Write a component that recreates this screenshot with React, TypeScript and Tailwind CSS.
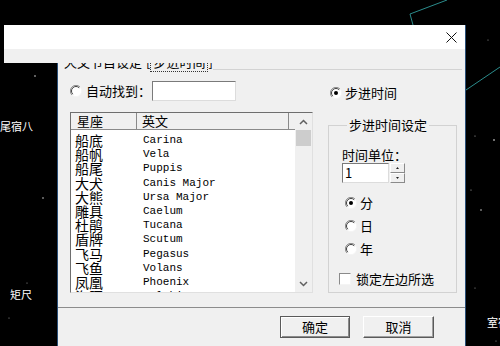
import React from "react";

const rows: [string, string][] = [
  ["船底", "Carina"],
  ["船帆", "Vela"],
  ["船尾", "Puppis"],
  ["大犬", "Canis Major"],
  ["大熊", "Ursa Major"],
  ["雕具", "Caelum"],
  ["杜鹃", "Tucana"],
  ["盾牌", "Scutum"],
  ["飞马", "Pegasus"],
  ["飞鱼", "Volans"],
  ["凤凰", "Phoenix"],
  ["海豚", "Delphinus"],
];

function Radio({ checked = false }: { checked?: boolean }) {
  return (
    <svg width="12" height="12" viewBox="0 0 12 12" className="shrink-0">
      <circle cx="6" cy="6" r="5.5" fill="#ffffff" />
      <path d="M10 2 A5.5 5.5 0 0 0 2 10" fill="none" stroke="#8a8a8a" strokeWidth="1" />
      <path d="M9.2 2.8 A4.5 4.5 0 0 0 2.8 9.2" fill="none" stroke="#404040" strokeWidth="1" />
      <path d="M2 10 A5.5 5.5 0 0 0 10 2" fill="none" stroke="#f4f4f4" strokeWidth="1" />
      {checked && <circle cx="6" cy="6" r="2" fill="#000" />}
    </svg>
  );
}

function Chevron({ up }: { up?: boolean }) {
  return (
    <svg width="9" height="6" viewBox="0 0 9 6">
      <path
        d={up ? "M1 5 L4.5 1.5 L8 5" : "M1 1 L4.5 4.5 L8 1"}
        fill="none"
        stroke="#606060"
        strokeWidth="1.5"
      />
    </svg>
  );
}

function Sky() {
  return (
    <>
      <svg className="absolute inset-0" width="500" height="346" viewBox="0 0 500 346">
        <g stroke="#2b8c8c" strokeWidth="1" fill="none">
          <line x1="410" y1="14" x2="447" y2="0" />
          <line x1="410" y1="14" x2="413" y2="25" />
          <line x1="466" y1="90" x2="500" y2="67" />
        </g>
        <g fill="#ffffff">
          <circle cx="35" cy="76" r="1" opacity="0.5" />
          <circle cx="43" cy="198" r="0.8" opacity="0.8" />
          <circle cx="494" cy="140" r="0.8" />
          <circle cx="475" cy="136" r="0.6" opacity="0.7" />
          <circle cx="471" cy="190" r="0.6" opacity="0.7" />
          <circle cx="481" cy="210" r="0.8" opacity="0.8" />
          <circle cx="27" cy="283" r="0.6" opacity="0.6" />
          <circle cx="9" cy="318" r="0.6" opacity="0.6" />
          <circle cx="475" cy="288" r="0.6" opacity="0.6" />
          <circle cx="496" cy="341" r="0.6" opacity="0.6" />
          <circle cx="488" cy="40" r="0.6" opacity="0.6" />
        </g>
      </svg>
      <span className="absolute left-0 top-[119px] text-[11px] leading-[14px] text-white whitespace-nowrap">尾宿八</span>
      <span className="absolute left-[10px] top-[287px] text-[11px] leading-[14px] text-white whitespace-nowrap">矩尺</span>
      <span className="absolute left-[487px] top-[315px] text-[11px] leading-[14px] text-white whitespace-nowrap">室宿</span>
    </>
  );
}

export default function App() {
  return (
    <div className="relative w-[500px] h-[346px] overflow-hidden bg-black font-['Noto_Sans_CJK_SC',sans-serif] text-black">
      <Sky />

      {/* dialog body */}
      <div className="absolute left-[57px] top-[49px] w-[409px] h-[297px] bg-[#f0f0f0] border-l border-r border-[#2a4f78] flex flex-col">
        {/* clipped group label */}
        <div className="mt-[5px] h-[16px] flex items-end pl-[6px]">
          <span className="text-[13px] leading-[16px] whitespace-nowrap">天文节目设定</span>
          <span className="ml-[4px] text-[13px] leading-[16px] whitespace-nowrap">
            [<span className="border border-dotted border-[#333] px-[2px]">步进时间</span>]
          </span>
          <div className="flex-1 h-[16px] border-b border-[#d3d3d3] mr-[3px]" />
        </div>

        {/* main two columns */}
        <div className="mt-[11px] flex h-[212px]">
          {/* left */}
          <div className="pl-[12px] w-[255px] flex flex-col">
            <div className="h-[20px] flex items-center">
              <Radio />
              <span className="ml-[4px] text-[13px] leading-[16px] whitespace-nowrap">自动找到：</span>
              <div className="ml-[1px] w-[84px] h-[20px] bg-white border border-t-[#7a7a7a] border-l-[#7a7a7a] border-r-[#dcdcdc] border-b-[#dcdcdc]" />
            </div>
            <div className="mt-[11px] w-[243px] h-[181px] bg-white border border-t-[#6e6e6e] border-l-[#6e6e6e] border-r-[#e0e0e0] border-b-[#e0e0e0] flex overflow-hidden">
              <div className="flex-1 flex flex-col overflow-hidden">
                <div className="h-[17px] shrink-0 flex bg-[#f0f0f0] border-b border-[#8a8a8a] text-[13px] leading-[16px]">
                  <div className="w-[66px] border-r border-[#8a8a8a] pl-[6px]">星座</div>
                  <div className="w-[152px] border-r border-[#8a8a8a] pl-[5px]">英文</div>
                  <div className="flex-1" />
                </div>
                <div className="pt-[3px] flex flex-col">
                  {rows.map(([cn, en]) => (
                    <div key={en} className="h-[14.2px] flex items-center">
                      <div className="w-[67px] pl-[4px] text-[14px] leading-[14px] whitespace-nowrap text-black">{cn}</div>
                      <div className="pl-[5px] font-['Liberation_Mono',monospace] text-[11px] leading-[14px] whitespace-nowrap">{en}</div>
                    </div>
                  ))}
                </div>
              </div>
              <div className="w-[17px] bg-[#f0f0f0] flex flex-col">
                <div className="h-[17px] flex items-center justify-center">
                  <Chevron up />
                </div>
                <div className="mx-[1px] h-[16px] bg-[#cdcdcd]" />
                <div className="flex-1" />
                <div className="h-[17px] flex items-center justify-center">
                  <Chevron />
                </div>
              </div>
            </div>
          </div>

          {/* right */}
          <div className="ml-[15px] w-[129px] flex flex-col">
            <div className="h-[20px] mt-[2px] flex items-center pl-[2px]">
              <Radio checked />
              <span className="ml-[3px] text-[13px] leading-[16px]">步进时间</span>
            </div>
            <fieldset className="mt-[14px] flex-1 border border-[#d2d2d2] pl-[13px] pt-[14px] min-w-0">
              <legend className="ml-[5px] px-[2px] text-[13px] leading-[16px]">步进时间设定</legend>
              <div className="text-[13px] leading-[16px]">时间单位：</div>
              <div className="flex h-[20px]">
                <div className="w-[47px] h-[20px] bg-white border border-t-[#7a7a7a] border-l-[#7a7a7a] border-r-[#dcdcdc] border-b-[#dcdcdc] pl-[2px] text-[13px] leading-[17px]">
                  1
                </div>
                <div className="ml-[1px] w-[15px] flex flex-col">
                  <div className="h-[10px] border border-t-white border-l-white border-r-[#8a8a8a] border-b-[#8a8a8a] flex items-center justify-center">
                    <svg width="3" height="2" viewBox="0 0 3 2"><path d="M0 2 L1.5 0 L3 2Z" fill="#222" /></svg>
                  </div>
                  <div className="h-[10px] border border-t-white border-l-white border-r-[#8a8a8a] border-b-[#8a8a8a] flex items-center justify-center">
                    <svg width="3" height="2" viewBox="0 0 3 2"><path d="M0 0 L1.5 2 L3 0Z" fill="#222" /></svg>
                  </div>
                </div>
              </div>
              <div className="mt-[12px] h-[16px] flex items-center pl-[3px]">
                <Radio checked />
                <span className="ml-[3px] text-[13px] leading-[16px]">分</span>
              </div>
              <div className="mt-[7px] h-[16px] flex items-center pl-[3px]">
                <Radio />
                <span className="ml-[3px] text-[13px] leading-[16px]">日</span>
              </div>
              <div className="mt-[7px] h-[16px] flex items-center pl-[3px]">
                <Radio />
                <span className="ml-[3px] text-[13px] leading-[16px]">年</span>
              </div>
              <div className="mt-[14px] h-[16px] flex items-center -ml-[3px]">
                <div className="w-[12px] h-[12px] bg-white border border-t-[#8a8a8a] border-l-[#8a8a8a] border-r-[#f4f4f4] border-b-[#f4f4f4]" />
                <span className="ml-[5px] text-[13px] leading-[16px] whitespace-nowrap">锁定左边所选</span>
              </div>
            </fieldset>
          </div>
        </div>

        {/* separator */}
        <div className="mt-[14px] border-t border-[#8c8c8c]" />

        {/* buttons */}
        <div className="pt-[8px] flex justify-end gap-[13px] pr-[31px]">
          <button className="w-[70px] h-[22px] bg-[#f0f0f0] border border-[#5a5a5a] shadow-[inset_1px_1px_0_#ffffff,inset_-1px_-1px_0_#8a8a8a] text-[13px] leading-[16px]">
            确定
          </button>
          <button className="w-[71px] h-[22px] bg-[#f0f0f0] border border-t-white border-l-white border-r-[#5a5a5a] border-b-[#5a5a5a] shadow-[inset_-1px_-1px_0_#a0a0a0] text-[13px] leading-[16px]">
            取消
          </button>
        </div>
      </div>

      {/* overlapping title window */}
      <div className="absolute left-[4px] top-[25px] w-[462px] h-[38px] z-10 flex flex-col border-r border-[#2a4f78]">
        <div className="h-[24px] bg-white flex items-center justify-end pr-[8px]">
          <svg width="11" height="11" viewBox="0 0 11 11">
            <path d="M0.5 0.5 L10.5 10.5 M10.5 0.5 L0.5 10.5" stroke="#111" strokeWidth="1" />
          </svg>
        </div>
        <div className="flex-1 bg-[#f0f0f0]" />
      </div>
    </div>
  );
}
